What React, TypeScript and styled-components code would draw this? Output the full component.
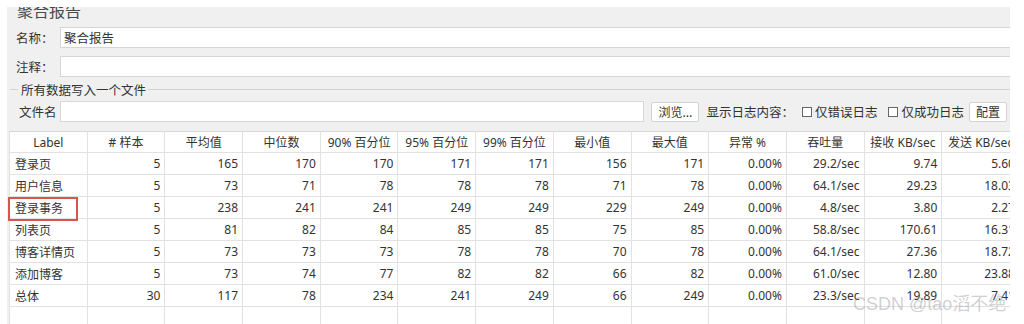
import React from 'react'
import styled, { createGlobalStyle } from 'styled-components'

const columns = [
  'Label',
  '# 样本',
  '平均值',
  '中位数',
  '90% 百分位',
  '95% 百分位',
  '99% 百分位',
  '最小值',
  '最大值',
  '异常 %',
  '吞吐量',
  '接收 KB/sec',
  '发送 KB/sec',
]

const rows: (string | number)[][] = [
  ['登录页', 5, 165, 170, 170, 171, 171, 156, 171, '0.00%', '29.2/sec', '9.74', '5.60'],
  ['用户信息', 5, 73, 71, 78, 78, 78, 71, 78, '0.00%', '64.1/sec', '29.23', '18.03'],
  ['登录事务', 5, 238, 241, 241, 249, 249, 229, 249, '0.00%', '4.8/sec', '3.80', '2.27'],
  ['列表页', 5, 81, 82, 84, 85, 85, 75, 85, '0.00%', '58.8/sec', '170.61', '16.31'],
  ['博客详情页', 5, 73, 73, 73, 78, 78, 70, 78, '0.00%', '64.1/sec', '27.36', '18.72'],
  ['添加博客', 5, 73, 74, 77, 82, 82, 66, 82, '0.00%', '61.0/sec', '12.80', '23.88'],
  ['总体', 30, 117, 78, 234, 241, 249, 66, 249, '0.00%', '23.3/sec', '19.89', '7.41'],
]

const App = () => {
  return (
    <>
      <GlobalStyle />
      <Page>
        <Panel>
          <Title>聚合报告</Title>
          <FieldRow $top={9}>
            <FieldLabel>名称：</FieldLabel>
            <TextInput readOnly defaultValue="聚合报告" />
          </FieldRow>
          <FieldRow $top={8}>
            <FieldLabel>注释：</FieldLabel>
            <TextInput readOnly defaultValue="" />
          </FieldRow>
          <GroupHead>
            <GroupLine $short />
            <GroupTitle>所有数据写入一个文件</GroupTitle>
            <GroupLine />
          </GroupHead>
          <FileRow>
            <FileLabel>文件名</FileLabel>
            <TextInput readOnly defaultValue="" />
            <Button $left={7}>浏览...</Button>
            <OptionText $left={7}>显示日志内容：</OptionText>
            <CheckBox $left={8} />
            <OptionText $left={3}>仅错误日志</OptionText>
            <CheckBox $left={11} />
            <OptionText $left={3}>仅成功日志</OptionText>
            <Button $left={5}>配置</Button>
          </FileRow>
          <Grid>
            <colgroup>
              {columns.map((c) => (
                <col key={c} style={{ width: 77.7 }} />
              ))}
            </colgroup>
            <thead>
              <tr>
                {columns.map((c) => (
                  <HeadCell key={c}>{c}</HeadCell>
                ))}
              </tr>
            </thead>
            <tbody>
              {rows.map((r) => (
                <tr key={r[0]}>
                  {r.map((v, i) => (
                    <Cell key={i} $left={i === 0}>
                      {v}
                    </Cell>
                  ))}
                </tr>
              ))}
              <tr>
                {columns.map((c) => (
                  <Cell key={c} $left={false} />
                ))}
              </tr>
            </tbody>
          </Grid>
        </Panel>
        <Highlight />
        <Watermark>CSDN @tao滔不绝</Watermark>
      </Page>
    </>
  )
}

const GlobalStyle = createGlobalStyle`
  html, body {
    margin: 0;
    padding: 0;
    background: #fff;
  }
  body {
    font-family: "Noto Sans", "Noto Sans CJK SC", sans-serif;
    color: #333;
  }
`

const Page = styled.div`
  position: relative;
  width: 1024px;
  height: 324px;
  box-sizing: border-box;
  padding: 7px 14px 0 7px;
  overflow: hidden;
  background: #fff;
`

const Panel = styled.div`
  height: 100%;
  background: #f0f0f0;
  overflow: hidden;
`

const Title = styled.div`
  margin-top: -5px;
  padding-left: 10px;
  height: 16px;
  font-size: 16px;
  line-height: 16px;
  color: #4a4a4a;
  font-family: "Noto Sans CJK SC", sans-serif;
`

const FieldRow = styled.div<{ $top: number }>`
  display: flex;
  align-items: center;
  height: 21px;
  margin-top: ${(p) => p.$top}px;
  padding-left: 9px;
`

const FieldLabel = styled.span`
  flex: none;
  width: 44px;
  font-size: 12.5px;
  white-space: nowrap;
`

const TextInput = styled.input`
  flex: 1;
  min-width: 0;
  height: 21px;
  box-sizing: border-box;
  margin: 0 -4px 0 0;
  padding: 0 3px;
  border: 1px solid #d6d6d6;
  background: #fff;
  font-family: "Noto Sans CJK SC", sans-serif;
  font-size: 12.5px;
  color: #333;
  outline: none;
`

const GroupHead = styled.div`
  display: flex;
  align-items: center;
  height: 16px;
  margin: 4px 0 0 3px;
`

const GroupLine = styled.div<{ $short?: boolean }>`
  flex: ${(p) => (p.$short ? '0 0 8px' : '1')};
  height: 0;
  border-top: 1px solid #d4d4d4;
  margin-right: ${(p) => (p.$short ? '3px' : '0')};
`

const GroupTitle = styled.span`
  font-size: 12.5px;
  margin-right: 2px;
  white-space: nowrap;
`

const FileRow = styled.div`
  display: flex;
  align-items: center;
  height: 21px;
  margin-top: 4px;
  padding: 0 3px 0 12px;

  & > input {
    margin-right: 0;
  }
`

const FileLabel = styled.span`
  flex: none;
  width: 41px;
  font-size: 12.5px;
  white-space: nowrap;
`

const Button = styled.button<{ $left: number }>`
  flex: none;
  height: 20px;
  margin-left: ${(p) => p.$left}px;
  padding: 0 6px;
  border: 1px solid #d3d3d3;
  border-radius: 2px;
  background: #fff;
  font-family: "Noto Sans CJK SC", sans-serif;
  font-size: 12px;
  color: #333;
`

const OptionText = styled.span<{ $left: number }>`
  flex: none;
  margin-left: ${(p) => p.$left}px;
  font-size: 12.5px;
  white-space: nowrap;
`

const CheckBox = styled.span<{ $left: number }>`
  flex: none;
  width: 8px;
  height: 8px;
  margin-left: ${(p) => p.$left}px;
  border: 1px solid #666;
  background: #fff;
`

const Grid = styled.table`
  width: 1010px;
  margin: 9px 0 0 2px;
  border-collapse: collapse;
  table-layout: fixed;
  background: #fff;
  font-size: 12px;
  color: #333;
`

const HeadCell = styled.th`
  height: 20px;
  padding: 0;
  border: 1px solid #e2e2e2;
  border-top-color: #d8d8d8;
  font-weight: normal;
  text-align: center;
  white-space: nowrap;
  overflow: hidden;
`

const Cell = styled.td<{ $left: boolean }>`
  height: 21px;
  padding: 0 4px 0 5px;
  border: 1px solid #e2e2e2;
  text-align: ${(p) => (p.$left ? 'left' : 'right')};
  white-space: nowrap;
  overflow: hidden;
`

const Highlight = styled.div`
  position: absolute;
  left: 8px;
  top: 197px;
  width: 70px;
  height: 24px;
  box-sizing: border-box;
  border: 2px solid #d9534f;
`

const Watermark = styled.div`
  position: absolute;
  left: 853px;
  top: 289px;
  font-family: "Liberation Sans", "Noto Sans CJK SC", sans-serif;
  font-size: 18px;
  color: rgba(150, 150, 150, 0.45);
  white-space: nowrap;
`

export default App
